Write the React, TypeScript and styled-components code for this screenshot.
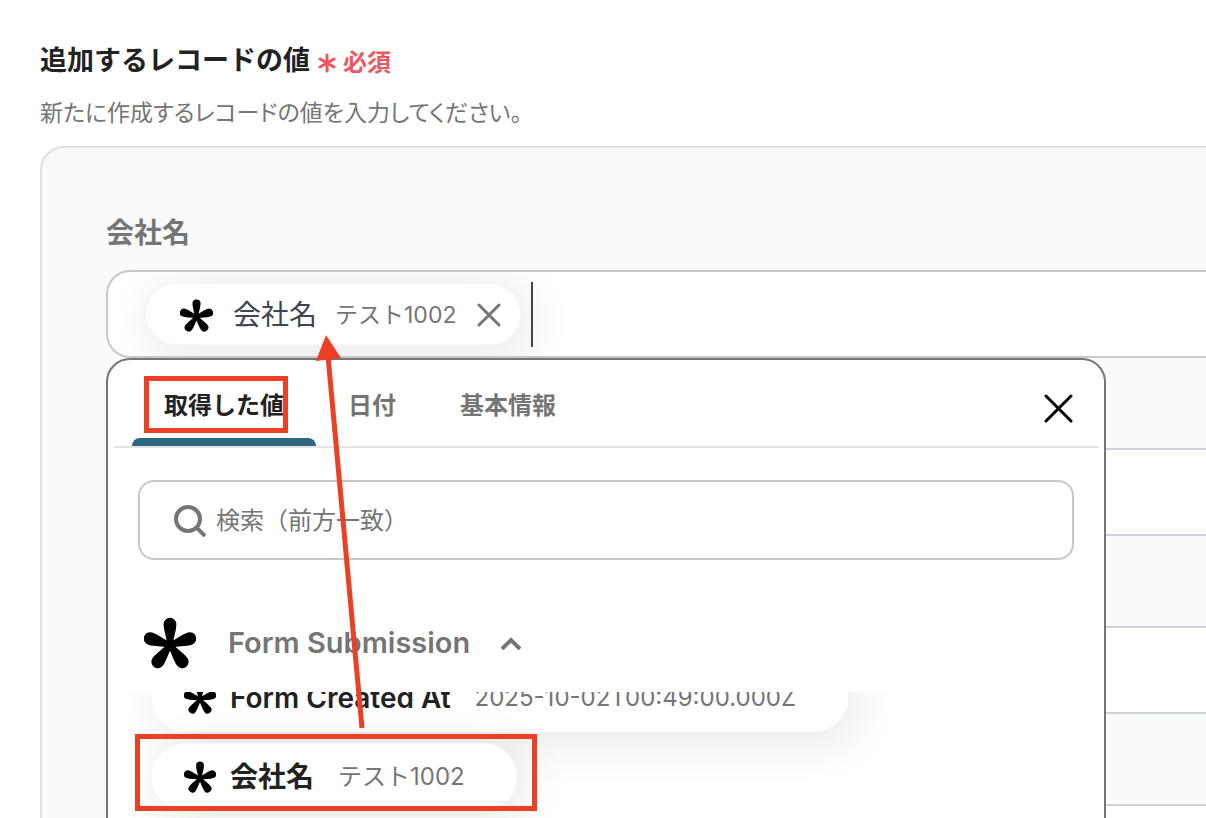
import React from "react";
import styled, { createGlobalStyle } from "styled-components";

const colors = {
  ink: "#222222",
  gray: "#757575",
  line: "#c8c8c8",
  red: "#eb4026",
};

const GlobalStyle = createGlobalStyle`
  *, *::before, *::after { box-sizing: border-box; }
  body {
    margin: 0;
    background: #ffffff;
    color: ${colors.ink};
    font-family: Inter, "Noto Sans CJK JP", sans-serif;
  }
  button, input { font: inherit; }
  svg { display: block; flex: none; }
`;

const Page = styled.main`
  position: relative;
  height: 100vh;
  overflow: hidden;
  padding: 41px 0 0 40px;
`;

const Heading = styled.div`
  display: flex;
  align-items: center;
  gap: 8px;
  height: 40px;
`;

const Title = styled.h1`
  margin: 0;
  font-size: 27px;
  line-height: 40px;
  font-weight: 700;
`;

const Required = styled.span`
  display: flex;
  align-items: center;
  gap: 7px;
  padding-top: 3px;
  color: #ee575f;
  font-size: 24px;
  line-height: 32px;
  font-weight: 600;
`;

const Description = styled.p`
  margin: 16px 0 17px;
  color: ${colors.gray};
  font-size: 23px;
  line-height: 32px;
  font-feature-settings: "palt";
`;

const Panel = styled.section`
  padding: 65px 0 0 64px;
  border: 2px solid #dde1e6;
  border-right: 0;
  border-radius: 24px 0 0 0;
  background: #fafafa;
`;

const FieldLabel = styled.h2`
  margin: 0 0 17px;
  color: ${colors.gray};
  font-size: 28px;
  line-height: 40px;
  font-weight: 600;
`;

const FieldStack = styled.div`
  position: relative;
  display: flex;
  flex-direction: column;
  gap: 90px;
`;

const TokenField = styled.div`
  display: flex;
  align-items: center;
  gap: 9px;
  height: 88px;
  padding-left: 36px;
  border: 2px solid ${colors.line};
  border-right: 0;
  border-radius: 24px 0 0 24px;
  background: #ffffff;
  overflow: hidden;
`;

const PlainField = styled.input`
  height: 88px;
  padding: 0 32px;
  border: 2px solid #ced3dc;
  border-right: 0;
  border-radius: 24px 0 0 24px;
  background: #ffffff;
`;

const Token = styled.span`
  display: flex;
  align-items: center;
  height: 64px;
  padding: 2px 19px 0 34px;
  border: 2px solid #f5f5f5;
  border-radius: 32px;
  background: #ffffff;
  box-shadow: 8px 8px 48px rgba(0, 0, 0, 0.1);
`;

const TokenName = styled.span`
  margin: 0 18px 0 20px;
  color: #3f454f;
  font-size: 28px;
  line-height: 40px;
`;

const SampleValue = styled.span<{ $compact?: boolean }>`
  color: ${colors.gray};
  font-size: ${(p) => (p.$compact ? 23 : 24)}px;
  line-height: 32px;
`;

const IconButton = styled.button`
  display: grid;
  place-items: center;
  padding: 0;
  border: 0;
  background: none;
  cursor: pointer;
`;

const RemoveButton = styled(IconButton)`
  width: 24px;
  height: 24px;
  margin-left: 21px;
  color: ${colors.gray};
`;

const Caret = styled.span`
  width: 2px;
  height: 65px;
  background: #3f454f;
  z-index: 1;
`;

const Picker = styled.div`
  position: absolute;
  top: 88px;
  left: 0;
  width: calc(100% - 100px);
  height: 560px;
  border: 2px solid ${colors.gray};
  border-radius: 24px;
  background: #ffffff;
`;

const TabBar = styled.div`
  display: flex;
  align-items: stretch;
  height: 88px;
  margin: 0 6px;
  padding: 0 22px 0 18px;
  border-bottom: 2px solid #e3e3e3;
`;

const Tab = styled.button<{ $active?: boolean }>`
  position: relative;
  padding: 6px 32px 0;
  border: 0;
  background: none;
  color: ${(p) => (p.$active ? colors.ink : colors.gray)};
  font-size: 24px;
  line-height: 32px;
  font-weight: 600;
  cursor: pointer;

  &::after {
    content: "";
    display: ${(p) => (p.$active ? "block" : "none")};
    position: absolute;
    left: 0;
    right: 0;
    bottom: 0;
    height: 8px;
    border-radius: 8px 8px 0 0;
    background: #2e6880;
  }
`;

const CloseButton = styled(IconButton)`
  width: 36px;
  margin: 10px 0 0 auto;
  color: #000000;
`;

const SearchBox = styled.label`
  display: flex;
  align-items: center;
  gap: 10px;
  height: 80px;
  margin: 32px 30px 0;
  padding: 2px 34px 0;
  border: 2px solid ${colors.line};
  border-radius: 16px;
  color: ${colors.gray};
`;

const SearchInput = styled.input`
  flex: 1;
  min-width: 0;
  padding: 0;
  border: 0;
  outline: 0;
  background: none;
  color: ${colors.ink};
  font-size: 24px;
  line-height: 32px;

  &::placeholder {
    color: ${colors.gray};
    opacity: 1;
  }
`;

const GroupToggle = styled.button`
  display: flex;
  align-items: center;
  height: 56px;
  margin: 55px 0 0 36px;
  padding: 0;
  border: 0;
  background: none;
  color: ${colors.gray};
  font-size: 29px;
  line-height: 40px;
  font-weight: 600;
  cursor: pointer;
`;

const GroupName = styled.span`
  margin: 0 30px 0 32px;
`;

const OptionList = styled.div`
  display: flex;
  flex-direction: column;
  align-items: flex-start;
  justify-content: flex-end;
  gap: 11px;
  height: 126px;
  margin: 21px 30px 0 16px;
  padding: 0 0 7px 28px;
  overflow: hidden;
`;

const Option = styled.button`
  display: flex;
  align-items: center;
  flex: none;
  height: 68px;
  padding: 0 52px 0 32px;
  border: 0;
  border-radius: 34px;
  background: #ffffff;
  box-shadow: 8px 8px 48px rgba(0, 0, 0, 0.1);
  cursor: pointer;
`;

const OptionName = styled.span`
  margin: 0 24px 0 14px;
  color: ${colors.ink};
  font-size: 28px;
  line-height: 40px;
  font-weight: 600;
`;

const Annotations = styled.svg`
  position: absolute;
  top: 0;
  left: 0;
  pointer-events: none;
`;

const PETAL =
  "M23 28C23 21 19.6 14 19.6 7.200a6.4 6.4 0 0 1 12.8 0C32.4 14 29 21 29 28z";

function FormMark({ size }: { size: number }) {
  return (
    <svg width={size} height={size} viewBox="0 0 52 52" aria-hidden="true">
      {[0, 72, 144, 216, 288].map((a) => (
        <path key={a} d={PETAL} transform={`rotate(${a} 26 28)`} />
      ))}
    </svg>
  );
}

function Cross({ size, weight }: { size: number; weight: number }) {
  const e = size - 2;
  return (
    <svg
      width={size}
      height={size}
      fill="none"
      stroke="currentColor"
      strokeWidth={weight}
      strokeLinecap="round"
      aria-hidden="true"
    >
      <path d={`M2 2L${e} ${e}M${e} 2L2 ${e}`} />
    </svg>
  );
}

const options = [
  { name: "Form Created At", value: "2025-10-02T00:49:00.000Z" },
  { name: "会社名", value: "テスト1002" },
];

export default function App() {
  return (
    <>
      <GlobalStyle />
      <Page>
        <Heading>
          <Title>追加するレコードの値</Title>
          <Required>
            <svg
              width="18"
              height="20"
              fill="none"
              stroke="currentColor"
              strokeWidth="3"
              strokeLinecap="round"
              aria-hidden="true"
            >
              <path d="M9 2V18M2 6L16 14M16 6L2 14" />
            </svg>
            必須
          </Required>
        </Heading>
        <Description>新たに作成するレコードの値を入力してください。</Description>

        <Panel>
          <FieldLabel>会社名</FieldLabel>
          <FieldStack>
            <TokenField>
              <Token>
                <FormMark size={33} />
                <TokenName>会社名</TokenName>
                <SampleValue $compact>テスト1002</SampleValue>
                <RemoveButton type="button" aria-label="削除">
                  <Cross size={24} weight={3} />
                </RemoveButton>
              </Token>
              <Caret />
            </TokenField>
            <PlainField type="text" aria-label="値 2" />
            <PlainField type="text" aria-label="値 3" />
            <PlainField type="text" aria-label="値 4" />

            <Picker>
              <TabBar role="tablist">
                <Tab type="button" role="tab" aria-selected="true" $active>
                  取得した値
                </Tab>
                <Tab type="button" role="tab" aria-selected="false">
                  日付
                </Tab>
                <Tab type="button" role="tab" aria-selected="false">
                  基本情報
                </Tab>
                <CloseButton type="button" aria-label="閉じる">
                  <Cross size={29} weight={3} />
                </CloseButton>
              </TabBar>

              <SearchBox>
                <svg
                  width="32"
                  height="32"
                  fill="none"
                  stroke="currentColor"
                  strokeWidth="4"
                  aria-hidden="true"
                >
                  <circle cx="14" cy="14" r="12" />
                  <path d="M22 22L31 31" />
                </svg>
                <SearchInput
                  type="text"
                  aria-label="検索"
                  placeholder="検索（前方一致）"
                />
              </SearchBox>

              <GroupToggle type="button" aria-expanded="true">
                <FormMark size={52} />
                <GroupName>Form Submission</GroupName>
                <svg
                  width="22"
                  height="14"
                  fill="none"
                  stroke="currentColor"
                  strokeWidth="4"
                  aria-hidden="true"
                >
                  <path d="M2 13L11 4L20 13" />
                </svg>
              </GroupToggle>

              <OptionList>
                {options.map((o) => (
                  <Option key={o.name} type="button">
                    <FormMark size={32} />
                    <OptionName>{o.name}</OptionName>
                    <SampleValue>{o.value}</SampleValue>
                  </Option>
                ))}
              </OptionList>
            </Picker>
          </FieldStack>
        </Panel>

        <Annotations width="560" height="818" aria-hidden="true">
          <g fill="none" stroke={colors.red} strokeWidth="5">
            <rect x="146.500" y="378.500" width="139" height="52" />
            <rect x="137.500" y="736.500" width="397" height="72" />
            <path d="M362 728L328 356" />
          </g>
          <path d="M326 335L341 358L316 361z" fill={colors.red} />
        </Annotations>
      </Page>
    </>
  );
}
